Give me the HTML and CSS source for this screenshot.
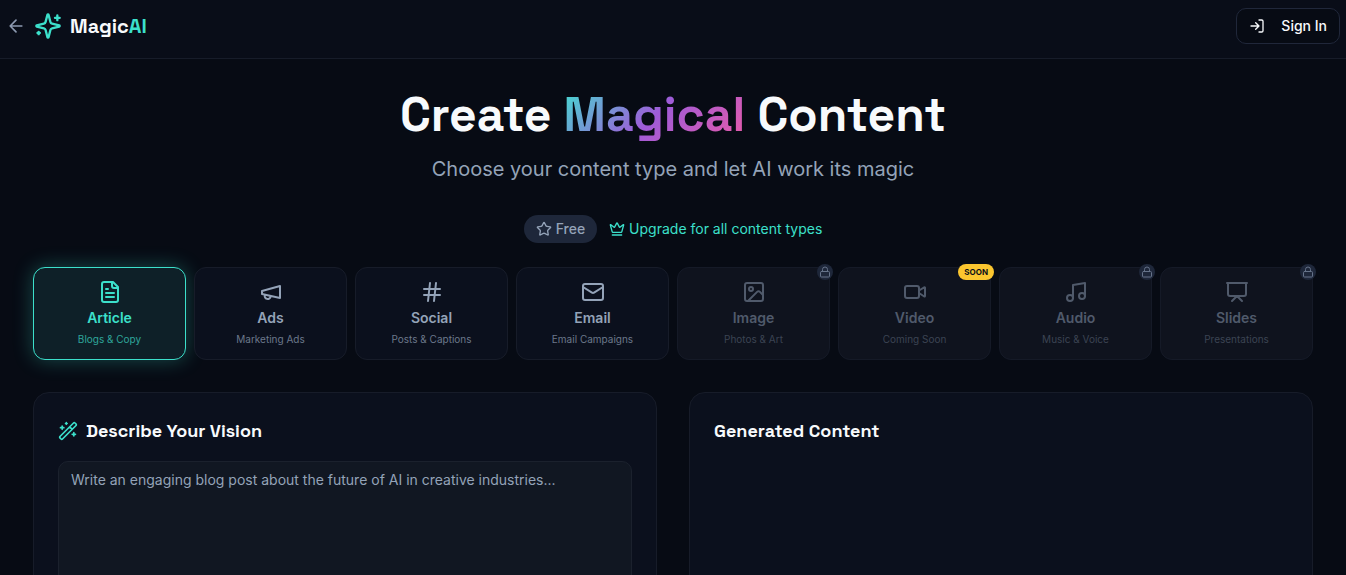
FILE: index.html
```html
<!DOCTYPE html>
<html lang="en">
<head>
<meta charset="utf-8">
<meta name="viewport" content="width=device-width, initial-scale=1">
<title>MagicAI</title>
<link rel="stylesheet" href="styles.css">
</head>
<body>
<header class="topbar">
  <div class="brand">
    <a class="back" href="#" aria-label="Back"><svg class="icon icon-20" viewBox="0 0 24 24"><path d="m12 19-7-7 7-7M19 12H5"/></svg></a>
    <a class="logo" href="#">
      <svg class="icon icon-28" viewBox="0 0 24 24"><path d="M9.937 15.5A2 2 0 0 0 8.5 14.063l-6.135-1.582a.5.5 0 0 1 0-.962L8.5 9.936A2 2 0 0 0 9.937 8.5l1.582-6.135a.5.5 0 0 1 .963 0L14.063 8.5A2 2 0 0 0 15.5 9.937l6.135 1.581a.5.5 0 0 1 0 .964L15.5 14.063a2 2 0 0 0-1.437 1.437l-1.582 6.135a.5.5 0 0 1-.963 0zM20 3v4M22 5h-4M4 17v2M5 18H3"/></svg>
      <span class="logo-text">Magic<span class="accent">AI</span></span>
    </a>
  </div>
  <button class="sign-in" type="button">
    <svg class="icon icon-16" viewBox="0 0 24 24"><path d="M15 3h4a2 2 0 0 1 2 2v14a2 2 0 0 1-2 2h-4M10 17l5-5-5-5M15 12H3"/></svg>
    Sign In
  </button>
</header>

<main class="page">
  <section class="hero">
    <h1 class="title">Create <span class="gradient">Magical</span> Content</h1>
    <p class="subtitle">Choose your content type and let AI work its magic</p>
  </section>

  <div class="plan">
    <span class="plan-badge"><svg class="icon icon-16" viewBox="0 0 24 24"><path d="M11.525 2.295a.53.53 0 0 1 .95 0l2.31 4.679a2.123 2.123 0 0 0 1.595 1.16l5.166.756a.53.53 0 0 1 .294.904l-3.736 3.638a2.123 2.123 0 0 0-.611 1.878l.882 5.14a.53.53 0 0 1-.771.56l-4.618-2.428a2.122 2.122 0 0 0-1.973 0L6.396 21.01a.53.53 0 0 1-.77-.56l.881-5.139a2.122 2.122 0 0 0-.611-1.879L2.16 9.795a.53.53 0 0 1 .294-.906l5.165-.755a2.122 2.122 0 0 0 1.597-1.16z"/></svg>Free</span>
    <a class="upgrade" href="#"><svg class="icon icon-16" viewBox="0 0 24 24"><path d="M11.562 3.266a.5.5 0 0 1 .876 0L15.39 8.87a1 1 0 0 0 1.516.294L21.183 5.5a.5.5 0 0 1 .798.519l-2.834 10.246a1 1 0 0 1-.956.734H5.81a1 1 0 0 1-.957-.734L2.02 6.02a.5.5 0 0 1 .798-.519l4.276 3.664a1 1 0 0 0 1.516-.294zM5 21h14"/></svg>Upgrade for all content types</a>
  </div>

  <div class="types">
    <button class="type active" type="button">
      <svg class="icon icon-24" viewBox="0 0 24 24"><path d="M15 2H6a2 2 0 0 0-2 2v16a2 2 0 0 0 2 2h12a2 2 0 0 0 2-2V7zM14 2v4a2 2 0 0 0 2 2h4M10 9H8M16 13H8M16 17H8"/></svg>
      <span class="type-name">Article</span><span class="type-note">Blogs &amp; Copy</span>
    </button>
    <button class="type" type="button">
      <svg class="icon icon-24" viewBox="0 0 24 24"><path d="m3 11 18-5v12L3 14v-3zM11.6 16.8a3 3 0 1 1-5.8-1.6"/></svg>
      <span class="type-name">Ads</span><span class="type-note">Marketing Ads</span>
    </button>
    <button class="type" type="button">
      <svg class="icon icon-24" viewBox="0 0 24 24"><path d="M4 9h16M4 15h16M10 3 8 21M16 3l-2 18"/></svg>
      <span class="type-name">Social</span><span class="type-note">Posts &amp; Captions</span>
    </button>
    <button class="type" type="button">
      <svg class="icon icon-24" viewBox="0 0 24 24"><rect width="20" height="16" x="2" y="4" rx="2"/><path d="m22 7-8.97 5.7a1.94 1.94 0 0 1-2.06 0L2 7"/></svg>
      <span class="type-name">Email</span><span class="type-note">Email Campaigns</span>
    </button>
    <div class="type-slot">
      <button class="type locked" type="button" disabled>
        <svg class="icon icon-24" viewBox="0 0 24 24"><rect width="18" height="18" x="3" y="3" rx="2"/><circle cx="9" cy="9" r="2"/><path d="m21 15-3.086-3.086a2 2 0 0 0-2.828 0L6 21"/></svg>
        <span class="type-name">Image</span><span class="type-note">Photos &amp; Art</span>
      </button>
      <span class="lock"><svg class="icon icon-12" viewBox="0 0 24 24"><rect width="18" height="11" x="3" y="11" rx="2"/><path d="M7 11V7a5 5 0 0 1 10 0v4"/></svg></span>
    </div>
    <div class="type-slot">
      <button class="type locked" type="button" disabled>
        <svg class="icon icon-24" viewBox="0 0 24 24"><path d="m16 13 5.223 3.482a.5.5 0 0 0 .777-.416V7.87a.5.5 0 0 0-.752-.432L16 10.5"/><rect x="2" y="6" width="14" height="12" rx="2"/></svg>
        <span class="type-name">Video</span><span class="type-note">Coming Soon</span>
      </button>
      <span class="soon">SOON</span>
    </div>
    <div class="type-slot">
      <button class="type locked" type="button" disabled>
        <svg class="icon icon-24" viewBox="0 0 24 24"><path d="M9 18V5l12-2v13"/><circle cx="6" cy="18" r="3"/><circle cx="18" cy="16" r="3"/></svg>
        <span class="type-name">Audio</span><span class="type-note">Music &amp; Voice</span>
      </button>
      <span class="lock"><svg class="icon icon-12" viewBox="0 0 24 24"><rect width="18" height="11" x="3" y="11" rx="2"/><path d="M7 11V7a5 5 0 0 1 10 0v4"/></svg></span>
    </div>
    <div class="type-slot">
      <button class="type locked" type="button" disabled>
        <svg class="icon icon-24" viewBox="0 0 24 24"><path d="M2 3h20M21 3v11a2 2 0 0 1-2 2H5a2 2 0 0 1-2-2V3M7 21l5-5 5 5"/></svg>
        <span class="type-name">Slides</span><span class="type-note">Presentations</span>
      </button>
      <span class="lock"><svg class="icon icon-12" viewBox="0 0 24 24"><rect width="18" height="11" x="3" y="11" rx="2"/><path d="M7 11V7a5 5 0 0 1 10 0v4"/></svg></span>
    </div>
  </div>

  <div class="panels">
    <section class="panel">
      <h2 class="panel-title"><svg class="icon icon-20 accent" viewBox="0 0 24 24"><path d="m21.64 3.64-1.28-1.28a1.21 1.21 0 0 0-1.72 0L2.36 18.64a1.21 1.21 0 0 0 0 1.72l1.28 1.28a1.2 1.2 0 0 0 1.72 0L21.64 5.36a1.2 1.2 0 0 0 0-1.72M14 7l3 3M5 6v4M19 14v4M10 2v2M7 8H3M21 16h-4M11 3H9"/></svg><label for="prompt">Describe Your Vision</label></h2>
      <textarea class="prompt" id="prompt" placeholder="Write an engaging blog post about the future of AI in creative industries..."></textarea>
    </section>
    <section class="panel">
      <h2 class="panel-title">Generated Content</h2>
    </section>
  </div>
</main>
</body>
</html>
```
FILE: styles.css
```css
* { box-sizing: border-box; }

html { scrollbar-width: none; }

body {
  margin: 0;
  background: #070b14;
  color: #f8fafc;
  font: 14px/20px Inter, "Liberation Sans", sans-serif;
}

a { color: inherit; text-decoration: none; }
button { font: inherit; color: inherit; }
h1, h2, p { margin: 0; }

.icon {
  flex: none;
  display: block;
  fill: none;
  stroke: currentColor;
  stroke-width: 2;
  stroke-linecap: round;
  stroke-linejoin: round;
}
.icon-12 { width: 12px; height: 12px; }
.icon-16 { width: 16px; height: 16px; }
.icon-20 { width: 20px; height: 20px; }
.icon-24 { width: 24px; height: 24px; }
.icon-28 { width: 28px; height: 28px; }

.accent { color: #3ce0cb; }

.topbar {
  display: flex;
  align-items: center;
  justify-content: space-between;
  padding: 8px 6px 14px;
  background: #090d18;
  border-bottom: 1px solid #171c29;
}
.brand, .logo { display: flex; align-items: center; gap: 8px; }
.back { color: #8c99b0; }
.logo .icon { color: #3ce0cb; }
.logo-text {
  font: 700 20px/28px "Space Grotesk", Inter, sans-serif;
}
.sign-in {
  display: flex;
  align-items: center;
  gap: 16px;
  height: 36px;
  padding: 0 12px;
  border: 1px solid #20273a;
  border-radius: 10px;
  background: #070b14;
  font-weight: 500;
}

.page {
  max-width: 1312px;
  margin: 0 auto;
  padding: 32px 16px;
}

.hero { text-align: center; }
.title {
  font: 700 48px/48px "Space Grotesk", Inter, sans-serif;
}
.gradient {
  padding-bottom: 4px;
  background: linear-gradient(135deg, #40e0d0, #9f5bd8 50%, #ec5aa5);
  background-clip: text;
  -webkit-background-clip: text;
  color: transparent;
}
.subtitle {
  margin-top: 16px;
  font-size: 20px;
  line-height: 28px;
  color: #94a3b8;
}

.plan {
  display: flex;
  justify-content: center;
  align-items: center;
  gap: 12px;
  margin: 32px 0 24px;
}
.plan-badge, .upgrade { display: flex; align-items: center; gap: 4px; }
.plan-badge {
  padding: 4px 12px;
  border-radius: 14px;
  background: #1e273a;
  color: #94a3b8;
  font-weight: 500;
}
.upgrade { color: #3ce0cb; }

.types {
  display: grid;
  grid-template-columns: repeat(8, minmax(0, 1fr));
  gap: 8px;
}
.type-slot { position: relative; }
.type {
  display: flex;
  flex-direction: column;
  align-items: center;
  gap: 4px;
  width: 100%;
  padding: 12px;
  border: 1px solid #171c29;
  border-radius: 12px;
  background: #0b101d;
  color: #94a3b8;
}
.type-name { font-weight: 600; }
.type-note { font-size: 10px; line-height: 15px; color: #6c788b; }
.type.active {
  border-color: #3ce0cb;
  background: #0e2028;
  color: #3ce0cb;
  box-shadow: 0 0 20px rgba(60, 224, 203, 0.3);
}
.active .type-note { color: #2fa69b; }
.type.locked {
  border-color: #151a27;
  background: #0f131e;
  color: #505a6b;
}
.locked .type-note { color: #3c4453; }

.lock, .soon {
  position: absolute;
  top: -3px;
  right: -3px;
  height: 16px;
}
.lock {
  display: grid;
  place-items: center;
  width: 16px;
  border-radius: 50%;
  background: #1e273a;
  color: #66738a;
}
.soon {
  padding: 0 6px;
  border-radius: 8px;
  background: #fbc62f;
  color: #0a0e18;
  font-size: 8px;
  font-weight: 700;
  line-height: 16px;
}

.panels {
  display: grid;
  grid-template-columns: repeat(2, minmax(0, 1fr));
  gap: 32px;
  margin-top: 32px;
}
.panel {
  padding: 24px;
  border: 1px solid #171c29;
  border-radius: 16px;
  background: #0b101d;
}
.panel-title {
  display: flex;
  align-items: center;
  gap: 8px;
  margin-bottom: 16px;
  font: 600 18px/28px "Space Grotesk", Inter, sans-serif;
}
.prompt {
  display: block;
  width: 100%;
  min-height: 200px;
  padding: 8px 12px;
  border: 1px solid #1b212d;
  border-radius: 10px;
  background: #111722;
  color: #f8fafc;
  font: inherit;
  resize: none;
}
.prompt::placeholder { color: #94a3b8; }
```
